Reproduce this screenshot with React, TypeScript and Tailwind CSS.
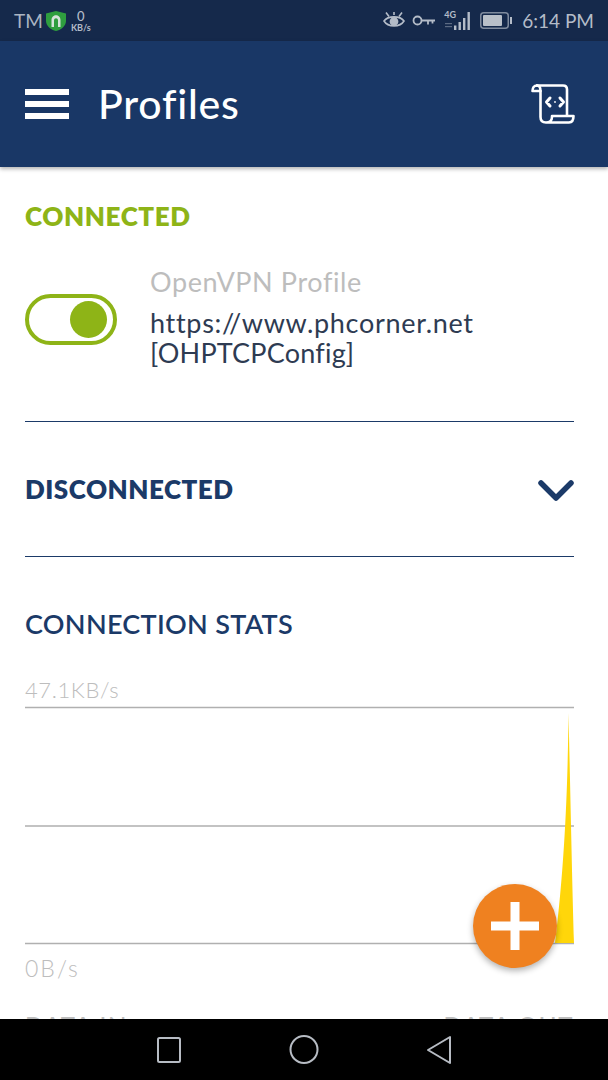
import React from "react";

const font = { fontFamily: '"Lato", "Open Sans", sans-serif' };

function Shield() {
  return (
    <svg width="22" height="22" viewBox="0 0 22 22" className="ml-[2px]">
      <path d="M11 1 L21 3.5 V11 C21 16 16 20 11 21 C6 20 1 16 1 11 V3.5 Z" fill="#2f9e3f" />
      <path d="M6.5 17 V10 C6.5 3.5 15.5 3.5 15.5 10 V17 H13 V10.5 C13 7.5 9 7.5 9 10.5 V17 Z" fill="#d6e2dc" />
    </svg>
  );
}

function Eye() {
  return (
    <svg width="22" height="20" viewBox="0 0 22 20" fill="none" stroke="#b4bcc8" strokeWidth="1.6">
      <path d="M1 10 C5 4.5 17 4.5 21 10 C17 16.5 5 16.5 1 10 Z" />
      <circle cx="11" cy="10.5" r="3.6" fill="#b4bcc8" />
      <path d="M3 1.5 L6 5.5 M19 1.5 L16 5.5 M11 1 V4" />
    </svg>
  );
}

function Key() {
  return (
    <svg width="24" height="12" viewBox="0 0 24 12" fill="none" stroke="#b4bcc8" strokeWidth="1.8">
      <circle cx="5.5" cy="5.5" r="4" />
      <path d="M9.5 5.5 H23 M16 5.5 V9.5 M20.5 5.5 V8.5" />
    </svg>
  );
}

function Signal() {
  return (
    <div className="relative h-[20px] w-[30px]">
      <svg width="30" height="20" viewBox="0 0 30 20" fill="#b4bcc8">
        <rect x="11" y="14.5" width="2.4" height="4.5" />
        <rect x="15.5" y="11" width="2.4" height="8" />
        <rect x="20" y="7" width="2.4" height="12" />
        <rect x="24.5" y="1" width="2.4" height="18" />
        <rect x="2" y="12" width="7" height="1.2" opacity="0.45" />
        <rect x="2" y="15" width="7" height="1.2" opacity="0.45" />
      </svg>
      <span className="absolute left-[1px] top-[-1px] text-[9px] font-bold leading-[10px] text-[#b4bcc8]">4G</span>
    </div>
  );
}

function Battery() {
  return (
    <svg width="32" height="18" viewBox="0 0 32 18">
      <rect x="0.75" y="0.75" width="27.5" height="15.5" rx="3" fill="none" stroke="#7f8b9e" strokeWidth="1.5" />
      <rect x="3" y="3" width="19" height="11" rx="1" fill="#b9c0c9" />
      <rect x="30" y="5" width="2" height="7" fill="#b4bcc8" />
    </svg>
  );
}

function ScriptIcon() {
  return (
    <svg width="44" height="40" viewBox="0 0 44 40" fill="none" stroke="#ffffff" strokeWidth="2.6" strokeLinejoin="round" strokeLinecap="round">
      <path d="M6 1.5 C3 1.5 1.5 3.5 1.5 7 H9.5" />
      <path d="M6 1.5 H32 C34.5 1.5 36 3 36 5.5 V31" />
      <path d="M6 1.5 C8.5 1.5 9.5 3.5 9.5 7 V33 C9.5 36.5 11.5 38.5 15 38.5 H38 C41 38.5 42.5 36 42.5 32 H21 V33 C21 36 19 38.5 15 38.5" />
      <path d="M19 14 L15.5 18 L19 22 M29 14 L32.5 18 L29 22" strokeWidth="3" />
      <circle cx="24" cy="18" r="0.9" fill="#ffffff" stroke="none" />
    </svg>
  );
}

function Chart() {
  return (
    <svg width="549" height="240" viewBox="0 0 549 240" className="block">
      <path d="M0 1.5 H549 M0 120 H549 M0 237.5 H549" stroke="#b0b0b0" strokeWidth="1.6" fill="none" />
      <path d="M543.5 7 C543 60 541 150 530 237 H549 C547 170 545 70 543.5 7 Z" fill="#ffd60a" />
    </svg>
  );
}

export default function App() {
  return (
    <div className="flex h-[1080px] w-[608px] flex-col overflow-hidden bg-white" style={font}>
      <div className="flex h-[41px] shrink-0 items-center justify-between bg-[#15294b] pl-[14px] pr-[14px]">
        <div className="flex items-center">
          <span className="text-[19px] leading-none text-[#aab4c2]">TM</span>
          <Shield />
          <div className="ml-[4px] flex w-[20px] flex-col items-center text-[#b4bcc8]">
            <span className="mb-[1px] text-[13px] font-medium leading-[12px]">0</span>
            <span className="text-[9px] font-bold leading-[9px]">KB/s</span>
          </div>
        </div>
        <div className="flex items-center gap-[7px]">
          <Eye />
          <Key />
          <Signal />
          <Battery />
          <span className="ml-[3px] text-[19px] leading-none text-[#b4bcc8]">6:14 PM</span>
        </div>
      </div>

      <header className="relative z-10 flex h-[126px] shrink-0 items-center justify-between bg-[#193766] pl-[25px] pr-[33px] shadow-[0_2px_4px_rgba(0,0,0,0.3)]">
        <div className="flex items-center gap-[29px]">
          <div className="flex w-[44px] flex-col gap-[6px]">
            <div className="h-[6px] bg-white" />
            <div className="h-[6px] bg-white" />
            <div className="h-[6px] bg-white" />
          </div>
          <h1 className="mb-[2px] text-[41px] font-medium leading-none tracking-[0.8px] text-white">Profiles</h1>
        </div>
        <ScriptIcon />
      </header>

      <main className="relative min-h-0 flex-1 overflow-hidden pl-[25px] pr-[34px]">
        <div className="pt-[34px] text-[26px] font-extrabold leading-[30px] tracking-[0.6px] text-[#8eb417]">CONNECTED</div>

        <div className="mt-[21px] flex h-[170px] items-start border-b border-[#1b3a68]">
          <div className="mt-[42px] flex h-[51px] w-[92px] shrink-0 items-center justify-end rounded-full border-[4px] border-[#8eb417] pr-[6px]">
            <div className="h-[37px] w-[37px] rounded-full bg-[#8eb417]" />
          </div>
          <div className="ml-[33px] mt-[15px] text-[27px]">
            <div className="leading-[30px] tracking-[0.6px] text-[#bdbdbd]">OpenVPN Profile</div>
            <div className="mt-[11px] leading-[30px] tracking-[0.7px] text-[#2e3b52]">https://www.phcorner.net</div>
            <div className="leading-[30px] tracking-[0.2px] text-[#2e3b52]">[OHPTCPConfig]</div>
          </div>
        </div>

        <div className="flex h-[135px] items-center justify-between border-b border-[#1b3a68]">
          <span className="text-[26px] font-extrabold leading-none tracking-[0.5px] text-[#1b3a68]">DISCONNECTED</span>
          <svg width="36" height="22" viewBox="0 0 36 22" fill="none" stroke="#1b3a68" strokeWidth="5.5" strokeLinecap="round" strokeLinejoin="round" className="mt-[3px]">
            <path d="M3 3 L18 18 L33 3" />
          </svg>
        </div>

        <div className="mt-[52px] text-[27px] font-semibold leading-[30px] tracking-[0.3px] text-[#1b3a68]">CONNECTION STATS</div>

        <div className="mt-[38px] text-[22px] font-light leading-[26px] tracking-[0.6px] text-[#bdbdbd]">47.1KB/s</div>
        <div className="mt-[3px]">
          <Chart />
        </div>
        <div className="mt-[9px] text-[23px] font-light leading-[26px] tracking-[2px] text-[#bdbdbd]">0B/s</div>

        <div className="mt-[32px] flex justify-between text-[24px] font-medium leading-[26px] tracking-[1.6px] text-[#bdbdbd]">
          <span>DATA IN</span>
          <span>DATA OUT</span>
        </div>

        <button className="absolute left-[473px] top-[717px] flex h-[84px] w-[84px] items-center justify-center rounded-full bg-[#ef8120] shadow-[0_3px_6px_rgba(0,0,0,0.3)]">
          <svg width="48" height="48" viewBox="0 0 48 48" fill="#ffffff">
            <rect x="19.5" y="0" width="9" height="48" />
            <rect x="0" y="19.5" width="48" height="9" />
          </svg>
        </button>
      </main>

      <nav className="flex h-[61px] shrink-0 items-center bg-black">
        <svg width="608" height="61" viewBox="0 0 608 61" fill="none" stroke="#b7bcc4" strokeWidth="2">
          <rect x="158" y="19" width="22" height="24" rx="1.5" />
          <ellipse cx="304" cy="30.5" rx="13.5" ry="13.5" />
          <path d="M450 18 V44 L428 31 Z" strokeLinejoin="round" />
        </svg>
      </nav>
    </div>
  );
}
